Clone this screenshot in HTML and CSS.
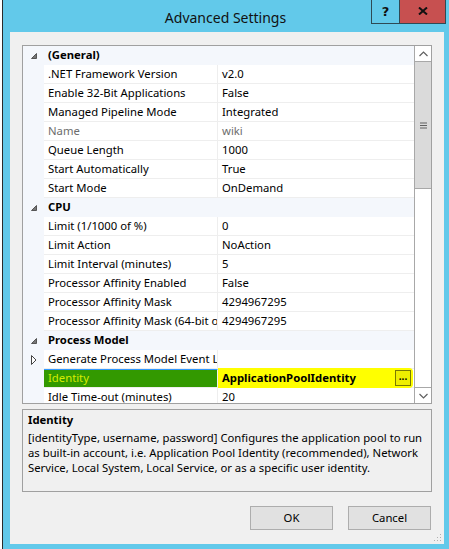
FILE: index.html
```html
<!DOCTYPE html>
<html>
<head>
<meta charset="utf-8">
<title>Advanced Settings</title>
<link rel="stylesheet" href="styles.css">
</head>
<body>
<div class="screen">
  <div class="behind"></div>
  <div class="window">
    <div class="titlebar">
      <div class="title-spacer"></div>
      <div class="title">Advanced Settings</div>
      <div class="caption-buttons">
        <div class="cap-btn help">?</div>
        <div class="cap-btn close">
          <svg width="10" height="8" viewBox="0 0 10 8"><path d="M1 0.5 L9 7.5 M9 0.5 L1 7.5" stroke="#111" stroke-width="2"/></svg>
        </div>
      </div>
    </div>
    <div class="client">
      <div class="grid">
        <div class="rows">
          <div class="row cat">
            <span class="gutter"><svg class="exp" width="6" height="6" viewBox="0 0 6 6"><path d="M5.5 0.5 L5.5 5.5 L0.5 5.5 Z" fill="#777" stroke="#555" stroke-width="1"/></svg></span>
            <span class="cat-label">(General)</span>
          </div>
          <div class="row item"><span class="gutter"></span><span class="name">.NET Framework Version</span><span class="value">v2.0</span></div>
          <div class="row item"><span class="gutter"></span><span class="name">Enable 32-Bit Applications</span><span class="value">False</span></div>
          <div class="row item"><span class="gutter"></span><span class="name">Managed Pipeline Mode</span><span class="value">Integrated</span></div>
          <div class="row item readonly"><span class="gutter"></span><span class="name">Name</span><span class="value">wiki</span></div>
          <div class="row item"><span class="gutter"></span><span class="name">Queue Length</span><span class="value">1000</span></div>
          <div class="row item"><span class="gutter"></span><span class="name">Start Automatically</span><span class="value">True</span></div>
          <div class="row item"><span class="gutter"></span><span class="name">Start Mode</span><span class="value">OnDemand</span></div>
          <div class="row cat">
            <span class="gutter"><svg class="exp" width="6" height="6" viewBox="0 0 6 6"><path d="M5.5 0.5 L5.5 5.5 L0.5 5.5 Z" fill="#777" stroke="#555" stroke-width="1"/></svg></span>
            <span class="cat-label">CPU</span>
          </div>
          <div class="row item"><span class="gutter"></span><span class="name">Limit (1/1000 of %)</span><span class="value">0</span></div>
          <div class="row item"><span class="gutter"></span><span class="name">Limit Action</span><span class="value">NoAction</span></div>
          <div class="row item"><span class="gutter"></span><span class="name">Limit Interval (minutes)</span><span class="value">5</span></div>
          <div class="row item"><span class="gutter"></span><span class="name">Processor Affinity Enabled</span><span class="value">False</span></div>
          <div class="row item"><span class="gutter"></span><span class="name">Processor Affinity Mask</span><span class="value">4294967295</span></div>
          <div class="row item"><span class="gutter"></span><span class="name">Processor Affinity Mask (64-bit option)</span><span class="value">4294967295</span></div>
          <div class="row cat">
            <span class="gutter"><svg class="exp" width="6" height="6" viewBox="0 0 6 6"><path d="M5.5 0.5 L5.5 5.5 L0.5 5.5 Z" fill="#777" stroke="#555" stroke-width="1"/></svg></span>
            <span class="cat-label">Process Model</span>
          </div>
          <div class="row item">
            <span class="gutter"><svg class="exp-closed" width="6" height="10" viewBox="0 0 6 10"><path d="M0.5 0.5 L5 5 L0.5 9.5 Z" fill="#fff" stroke="#444" stroke-width="1"/></svg></span>
            <span class="name">Generate Process Model Event Log Entry</span><span class="value"></span>
          </div>
          <div class="row item selected">
            <span class="gutter"></span>
            <span class="name">Identity</span>
            <span class="value"><span class="hl"><span class="hl-text">ApplicationPoolIdentity</span><span class="ellipsis">...</span></span></span>
          </div>
          <div class="row item"><span class="gutter"></span><span class="name">Idle Time-out (minutes)</span><span class="value">20</span></div>
        </div>
        <div class="scrollbar">
          <div class="sb-btn">
            <svg width="9" height="6" viewBox="0 0 9 6"><path d="M0.5 5 L4.5 1 L8.5 5" fill="none" stroke="#606060" stroke-width="1.2"/></svg>
          </div>
          <div class="sb-thumb">
            <svg width="7" height="7" viewBox="0 0 7 7"><path d="M0 1 H7 M0 3.5 H7 M0 6 H7" stroke="#606060" stroke-width="1.2"/></svg>
          </div>
          <div class="sb-track"></div>
          <div class="sb-btn down">
            <svg width="9" height="6" viewBox="0 0 9 6"><path d="M0.5 1 L4.5 5 L8.5 1" fill="none" stroke="#606060" stroke-width="1.2"/></svg>
          </div>
        </div>
      </div>
      <div class="desc">
        <div class="desc-title">Identity</div>
        <div class="desc-text">[identityType, username, password] Configures the application pool to run<br>as built-in account, i.e. Application Pool Identity (recommended), Network<br>Service, Local System, Local Service, or as a specific user identity.</div>
      </div>
      <div class="actions">
        <div class="btn">OK</div>
        <div class="btn">Cancel</div>
      </div>
      <svg class="grip" width="8" height="8" viewBox="0 0 8 8">
        <rect x="6" y="0" width="1" height="1" fill="#b0b0b0"/>
        <rect x="3" y="3" width="1" height="1" fill="#b0b0b0"/><rect x="6" y="3" width="1" height="1" fill="#b0b0b0"/>
        <rect x="0" y="6" width="1" height="1" fill="#b0b0b0"/><rect x="3" y="6" width="1" height="1" fill="#b0b0b0"/><rect x="6" y="6" width="1" height="1" fill="#b0b0b0"/>
      </svg>
    </div>
  </div>
</div>
</body>
</html>
```

FILE: styles.css
```css
* { box-sizing: border-box; }
html, body { margin: 0; padding: 0; }
body {
  width: 449px;
  height: 549px;
  overflow: hidden;
  background: #ffffff;
  font-family: "Noto Sans", "Open Sans", sans-serif;
  font-size: 11.3px;
  color: #000;
}
.screen {
  display: flex;
  width: 449px;
  height: 549px;
}
.behind {
  width: 2px;
  background: #ffffff;
}
.window {
  flex: 1;
  display: flex;
  flex-direction: column;
  background: #62c9ea;
  border-left: 1px solid #2b2b2b;
  padding: 0 5px 5px 7px;
}
.titlebar {
  height: 32px;
  display: flex;
  margin: 0 -5px 0 -7px;
}
.title-spacer { width: 77px; }
.title {
  flex: 1;
  text-align: center;
  font-size: 14px;
  line-height: 16px;
  padding-top: 10px;
  color: #111;
}
.caption-buttons {
  display: flex;
  height: 24px;
  margin-right: 3px;
}
.cap-btn {
  height: 24px;
  border: 1px solid #2e4a55;
  border-top: none;
  display: flex;
  align-items: center;
  justify-content: center;
}
.help {
  width: 28px;
  font-weight: bold;
  font-size: 13px;
  font-family: "DejaVu Sans", sans-serif;
  color: #111;
  border-right: none;
  padding-bottom: 1px;
}
.close {
  width: 47px;
  background: #c75050;
  padding-bottom: 2px;
}
.client {
  position: relative;
  flex: 1;
  background: #f0f0f0;
  padding: 13px 12px 0 12px;
  display: flex;
  flex-direction: column;
}
.grid {
  height: 359px;
  border: 1px solid #a0a0a0;
  display: flex;
  background: #fff;
}
.rows {
  flex: 1;
  overflow: hidden;
  display: flex;
  flex-direction: column;
}
.row {
  flex: none;
  height: 19px;
  display: grid;
  grid-template-columns: 21px 174px 1fr;
  line-height: 18px;
}
.gutter {
  background: #f4f7fc;
  display: flex;
  align-items: center;
  justify-content: center;
}
.exp-closed { margin-top: 1px; }
.cat { background: #f4f7fc; }
.cat-label {
  grid-column: 2 / 4;
  font-weight: bold;
  padding-left: 4px;
}
.name, .value {
  white-space: nowrap;
  overflow: hidden;
  border-bottom: 1px solid #eeeeee;
  padding-left: 4px;
}
.name { border-right: 1px solid #eeeeee; }
.readonly .name, .readonly .value { color: #6d6d6d; }
.selected .name {
  background: #339900;
  color: #d6ec00;
  border-top: 1px solid #3399ff;
  line-height: 16px;
}
.selected .value {
  padding-left: 0;
  display: flex;
  align-items: stretch;
  overflow: visible;
}
.hl {
  flex: 1;
  background: #ffff00;
  margin: -1px 1px -1px 0;
  border-radius: 0 4px 4px 0;
  display: flex;
  align-items: center;
  justify-content: space-between;
  padding-left: 4px;
  padding-right: 2px;
}
.hl-text { font-weight: bold; }
.ellipsis {
  width: 16px;
  height: 16px;
  border: 1px solid #7a7a00;
  background: #eeee00;
  font-size: 10px;
  line-height: 10px;
  text-align: center;
  font-weight: bold;
}
.scrollbar {
  width: 17px;
  border-left: 1px solid #a8a8a8;
  display: flex;
  flex-direction: column;
  background: #fff;
}
.sb-btn {
  height: 16px;
  display: flex;
  align-items: center;
  justify-content: center;
  border-bottom: 1px solid #a8a8a8;
}
.sb-btn.down {
  border-bottom: none;
  border-top: 1px solid #a8a8a8;
}
.sb-thumb {
  height: 127px;
  background: #dadada;
  border-bottom: 1px solid #a8a8a8;
  display: flex;
  align-items: center;
  justify-content: center;
}
.sb-track { flex: 1; }
.desc {
  margin-top: 5px;
  height: 83px;
  border: 1px solid #a0a0a0;
  padding: 2px 5px 0 5px;
}
.desc-title {
  font-weight: bold;
  line-height: 16px;
  margin-bottom: 2px;
}
.desc-text {
  line-height: 15px;
  white-space: nowrap;
}
.actions {
  margin-top: 14px;
  display: flex;
  justify-content: flex-end;
  gap: 15px;
  padding-right: 1px;
}
.btn {
  width: 83px;
  height: 24px;
  background: #e1e1e1;
  border: 1px solid #adadad;
  text-align: center;
  line-height: 22px;
}
.grip {
  position: absolute;
  right: 2px;
  bottom: 2px;
}
```
